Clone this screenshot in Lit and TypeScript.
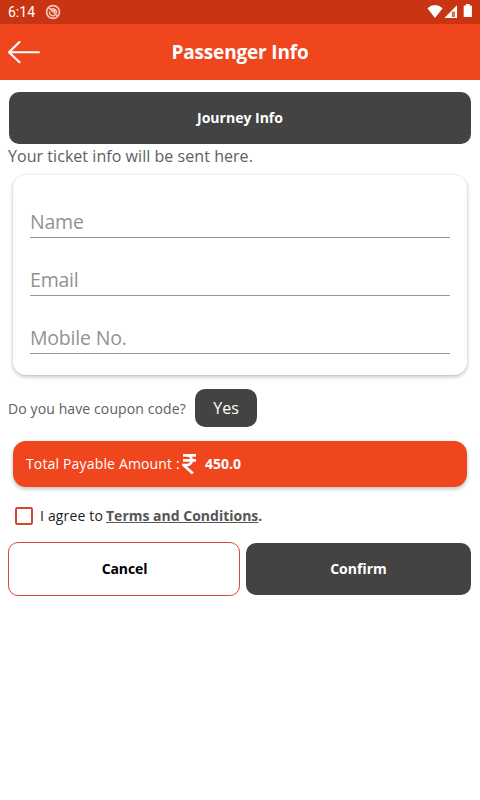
import { LitElement, html, css } from "lit";
import { customElement, state } from "lit/decorators.js";

@customElement("app-root")
export class AppRoot extends LitElement {
  @state() private agreed = false;

  static styles = css`
    :host {
      display: flex;
      flex-direction: column;
      box-sizing: border-box;
      width: 480px;
      height: 800px;
      overflow: hidden;
      background: #fff;
      font-family: "Open Sans", "Noto Sans", sans-serif;
      color: #606060;
    }
    * { box-sizing: border-box; }
    svg { display: block; flex: none; }
    button { font: inherit; border: 0; padding: 0; cursor: pointer; }
    .status {
      display: flex;
      height: 24px;
      padding: 0 7px 0 8px;
      align-items: center;
      background: #c93512;
      color: #fff;
      font: 14px/24px Roboto, sans-serif;
    }
    .clock { width: 37px; }
    .system { margin-left: auto; }
    .bar {
      display: grid;
      grid-template-columns: 40px 1fr 40px;
      height: 56px;
      align-items: center;
      background: #ef461e;
      color: #fff;
    }
    .title { margin: 0; font-size: 19px; letter-spacing: -0.17px; line-height: 56px; font-weight: 700; text-align: center; }
    .back { background: none; }
    .journey {
      height: 52px;
      margin: 12px 9px 0;
      padding-bottom: 2px;
      border-radius: 10px;
      background: #434343;
      color: #fff;
      font-size: 14px;
      font-weight: 700;
    }
    .note { margin: 0; padding-left: 8px; height: 31px; font-size: 16px; line-height: 24px; letter-spacing: 0.05px; }
    .card {
      height: 200px;
      margin: 0 13px;
      padding: 5px 17px 0;
      border-radius: 13px;
      background: #fff;
      box-shadow: 0 2px 4px rgba(0, 0, 0, 0.22), 0 0 2px rgba(0, 0, 0, 0.12);
    }
    .field {
      display: block;
      width: 100%;
      height: 58px;
      padding: 26px 0 0;
      border: 0;
      border-bottom: 1px solid #959595;
      outline: 0;
      background: none;
      font: 19.5px/30px "Open Sans", sans-serif;
      letter-spacing: -0.2px;
      color: #434343;
    }
    .field::placeholder { color: #979191; opacity: 1; }
    .coupon { display: flex; height: 38px; margin-top: 14px; padding-left: 8px; align-items: center; font-size: 14px; }
    .question { width: 187px; white-space: nowrap; letter-spacing: 0.11px; }
    .yes { width: 62px; height: 38px; border-radius: 10px; background: #434343; color: #fff; font-size: 16px; }
    .total {
      display: flex;
      height: 46px;
      margin: 14px 13px 0;
      padding-left: 13px;
      align-items: center;
      border-radius: 13px;
      background: #ef461e;
      box-shadow: 0 2px 4px rgba(0, 0, 0, 0.26);
      color: #fff;
      font-size: 14px;
      white-space: nowrap;
    }
    .label { width: 156px; padding-bottom: 1px; letter-spacing: 0.16px; }
    .amount { margin-left: 8px; padding-bottom: 1px; }
    .terms { display: flex; height: 20px; margin-top: 19px; padding-left: 15px; align-items: center; font-size: 14px; color: #222; }
    .check { width: 18px; height: 18px; margin: 0 7px 0 0; border: 2px solid #d24b31; border-radius: 2px; appearance: none; }
    .check:checked { background: #d24b31; }
    .agree { width: 66px; padding-bottom: 2px; letter-spacing: 0.17px; white-space: nowrap; }
    .link { padding-bottom: 2px; color: #555; font-weight: 700; }
    .actions { display: flex; gap: 6px; margin-top: 16px; padding: 0 9px 0 8px; align-items: center; font-size: 14px; font-weight: 700; }
    .cancel { width: 232px; height: 54px; padding: 0 0 2px 1px; border: 1px solid #d84a30; border-radius: 10px; background: #fff; color: #000; letter-spacing: -0.1px; }
    .confirm { flex: 1; height: 52px; padding-bottom: 2px; border-radius: 10px; background: #434343; color: #fff; }
  `;

  private toggle(e: Event) {
    this.agreed = (e.target as HTMLInputElement).checked;
  }

  render() {
    return html`
      <div class="status">
        <span class="clock">6:14</span>
        <svg width="16" height="24" viewBox="0 0 16 24" fill="none" stroke="#f6c5b8">
          <circle cx="8" cy="12" r="6.4" stroke-width="1.7" />
          <path d="M5.3 9.6A3.8 3.8 0 0 1 11.4 13.4M4.5 11.3A3.8 3.8 0 0 0 10.2 15.2" stroke-width="1.5" />
          <path d="M4 8L12.5 16" stroke-width="1.6" />
          <path d="M7 10.3h2.2l1 2.2" stroke-width="1.5" />
        </svg>
        <svg class="system" width="46" height="24" viewBox="0 0 46 24" fill="#fff">
          <path d="M.4 8.3Q8 1.8 15.6 8.3L8 18z" />
          <path d="M30 5.3V18H17.3z" />
          <path d="M24.8 11.5h3.2V17h-3.2z" fill="#c93512" opacity=".7" />
          <path d="M37.3 5.4h1.7V4h3.6v1.4h1.7q.6 0 .6.6V16.4q0 .6-.6.6h-7q-.6 0-.6-.6V6q0-.6.6-.6z" />
        </svg>
      </div>
      <header class="bar">
        <button class="back" aria-label="Back">
          <svg width="40" height="24" viewBox="0 0 40 24" fill="none" stroke="#fff" stroke-width="2.1" stroke-linecap="round" stroke-linejoin="round">
            <path d="M39 12.2H9M19.5 2L9 12.2L19.5 22.2" />
          </svg>
        </button>
        <h1 class="title">Passenger Info</h1>
      </header>
      <button class="journey">Journey Info</button>
      <p class="note">Your ticket info will be sent here.</p>
      <section class="card">
        ${["Name", "Email", "Mobile No."].map((p) => html`<input class="field" placeholder=${p} aria-label=${p} />`)}
      </section>
      <div class="coupon">
        <span class="question">Do you have coupon code?</span>
        <button class="yes">Yes</button>
      </div>
      <div class="total">
        <span class="label">Total Payable Amount :</span>
        <svg width="15" height="22" viewBox="0 0 15 22" fill="none" stroke="#fff" stroke-width="2.7">
          <path d="M1 2.4H14M1 7.4H14M1.2 2.4H4.4C11.5 2.4 11.5 12 4.4 12H1.5L10.8 20.6" />
        </svg>
        <b class="amount">450.0</b>
      </div>
      <div class="terms">
        <input class="check" type="checkbox" aria-label="I agree" .checked=${this.agreed} @change=${this.toggle} />
        <span class="agree">I agree to</span>
        <b class="link"><u>Terms and Conditions</u>.</b>
      </div>
      <div class="actions">
        <button class="cancel">Cancel</button>
        <button class="confirm">Confirm</button>
      </div>
    `;
  }
}
